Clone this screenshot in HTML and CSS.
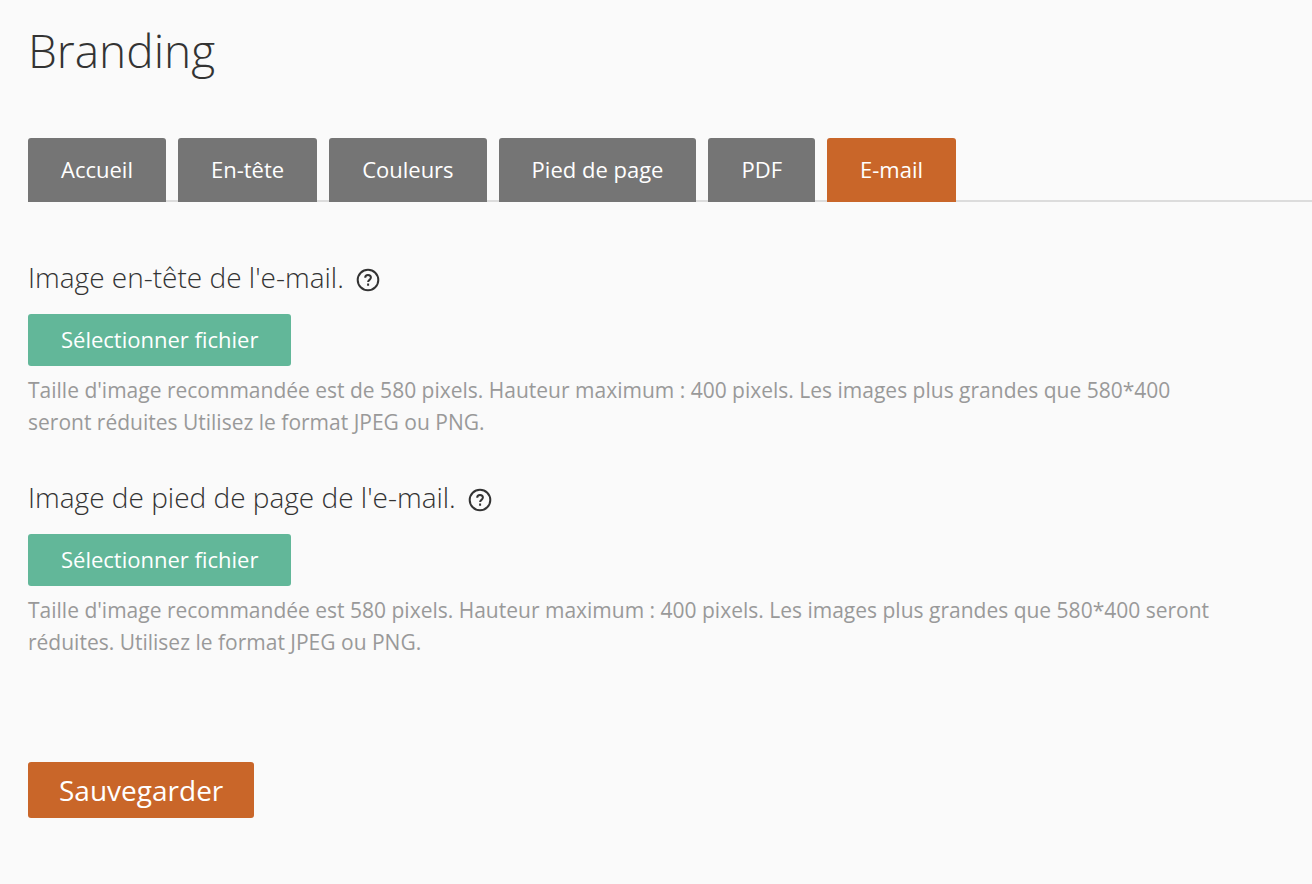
FILE: index.html
```html
<!DOCTYPE html>
<html lang="fr">
<head>
<meta charset="utf-8">
<title>Branding</title>
<link rel="stylesheet" href="styles.css">
</head>
<body>
<main class="page">
  <h1 class="title">Branding</h1>
  <nav class="tabs">
    <a class="tab" href="#accueil">Accueil</a>
    <a class="tab" href="#en-tete">En-tête</a>
    <a class="tab" href="#couleurs">Couleurs</a>
    <a class="tab" href="#pied">Pied de page</a>
    <a class="tab" href="#pdf">PDF</a>
    <a class="tab active" href="#email" aria-current="page">E-mail</a>
  </nav>
  <form class="form">
    <section class="field">
      <h2 class="label">Image en-tête de l'e-mail.
        <svg class="help" viewBox="0 0 24 24" aria-hidden="true"><circle cx="12" cy="12" r="10.3"/><path d="M9.2 9.7C9.2 8 10.4 7 12 7s2.9 1 2.9 2.6c0 2.2-2.8 2.3-2.8 4.4M12.1 15.6v2.2"/></svg>
      </h2>
      <button class="button select" type="button">Sélectionner fichier</button>
      <p class="hint">Taille d'image recommandée est de 580 pixels. Hauteur maximum : 400 pixels. Les images plus grandes que 580*400 seront réduites Utilisez le format JPEG ou PNG.</p>
    </section>
    <section class="field">
      <h2 class="label">Image de pied de page de l'e-mail.
        <svg class="help" viewBox="0 0 24 24" aria-hidden="true"><circle cx="12" cy="12" r="10.3"/><path d="M9.2 9.7C9.2 8 10.4 7 12 7s2.9 1 2.9 2.6c0 2.2-2.8 2.3-2.8 4.4M12.1 15.6v2.2"/></svg>
      </h2>
      <button class="button select" type="button">Sélectionner fichier</button>
      <p class="hint">Taille d'image recommandée est 580 pixels. Hauteur maximum : 400 pixels. Les images plus grandes que 580*400 seront réduites. Utilisez le format JPEG ou PNG.</p>
    </section>
    <button class="button save" type="submit">Sauvegarder</button>
  </form>
</main>
</body>
</html>
```
FILE: styles.css
```css
* { box-sizing: border-box; }
body {
  margin: 0;
  background: #fafafa;
  color: #333;
  font-family: "Open Sans", sans-serif;
}
.page { padding: 18px 0 64px 28px; }
.title {
  margin: 0 0 56px;
  font-size: 46px;
  font-weight: 300;
  line-height: 64px;
}
.tabs {
  display: flex;
  gap: 12px;
  box-shadow: inset 0 -2px #dcdcdc;
}
.tab {
  padding: 0 33px 2px;
  border-radius: 3px 3px 0 0;
  background: #757575;
  color: #fff;
  font-size: 22px;
  line-height: 62px;
  text-decoration: none;
}
.tab.active { background: #c96629; }
.form { padding-top: 56px; }
.field { margin-bottom: 40px; }
.label {
  display: flex;
  align-items: center;
  gap: 12px;
  margin: 0 0 18px;
  font-size: 28px;
  font-weight: 300;
  line-height: 38px;
}
.help {
  width: 24px;
  height: 24px;
  margin-top: 6px;
  fill: none;
  stroke: currentColor;
  stroke-width: 2;
}
.button {
  display: block;
  padding: 0 31px;
  border: 0;
  border-radius: 3px;
  color: #fff;
  font-family: inherit;
}
.select {
  padding: 0 33px 2px;
  background: #62b799;
  font-size: 22px;
  line-height: 50px;
}
.hint {
  max-width: 1190px;
  margin: 8px 0 0;
  color: #999;
  font-size: 21px;
  line-height: 32px;
}
.save {
  margin-top: 104px;
  background: #c96629;
  font-size: 28px;
  line-height: 56px;
}
```
